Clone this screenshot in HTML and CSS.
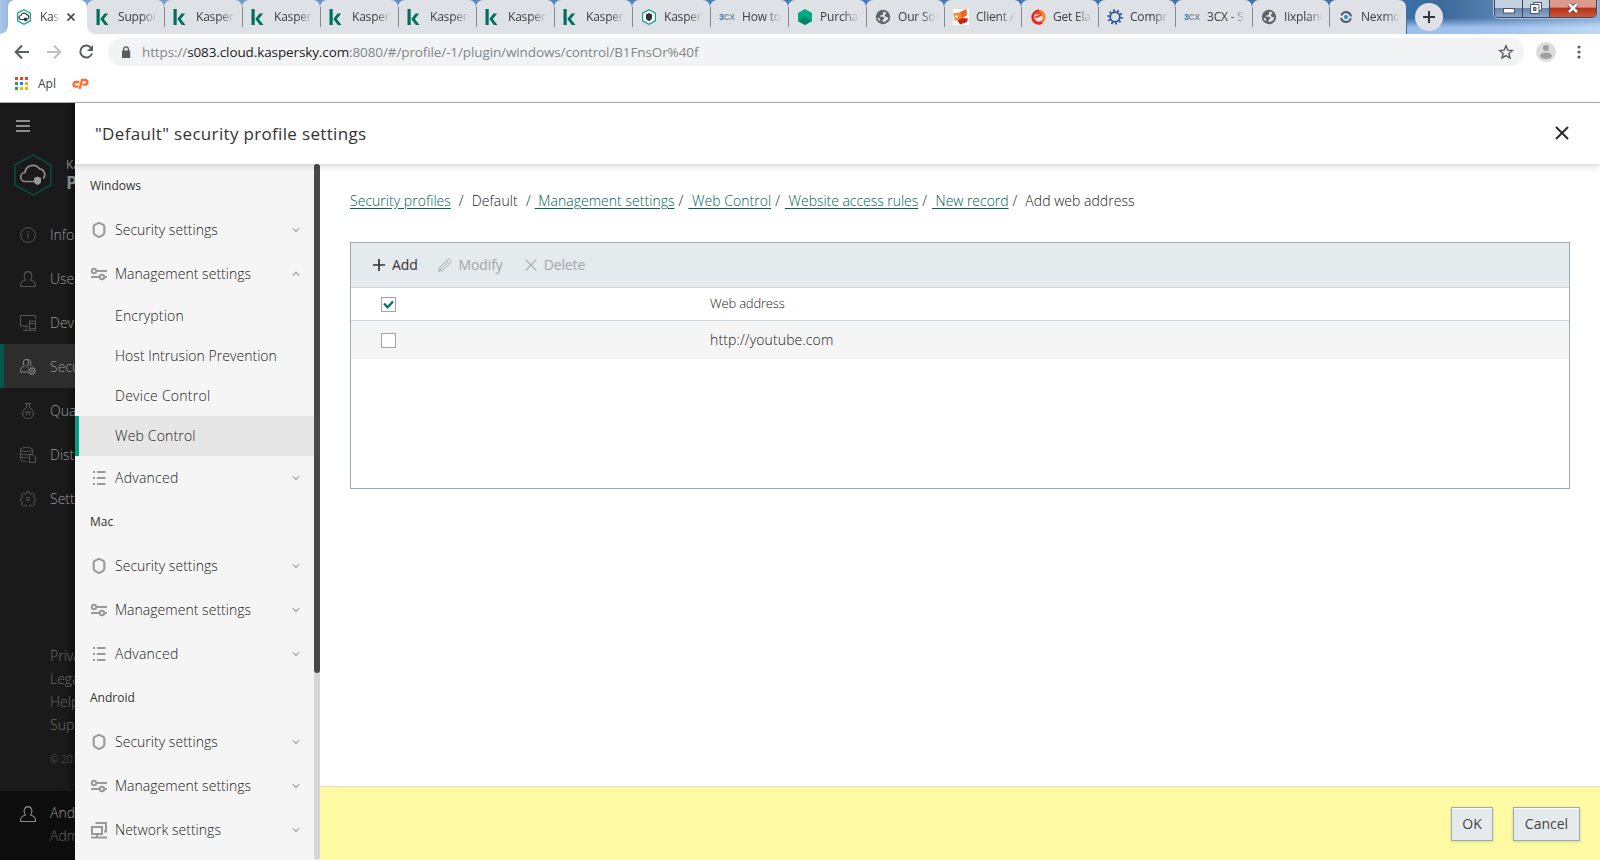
FILE: index.html
```
<!DOCTYPE html>
<html lang="en">
<head>
<meta charset="utf-8">
<title>Security profile settings</title>
<link rel="stylesheet" href="styles.css">
</head>
<body>
<svg class="defs" width="0" height="0">
  <symbol id="k" viewBox="0 0 16 16"><path d="M.5 0h3.200v16H.5zM8.500 4.500h3.700L7.800 10l4.700 6H8.800L4.300 10z" fill="#00705c"/></symbol>
  <symbol id="cloudhex" viewBox="0 0 16 16"><path d="M8 .7l6.400 3.500v7.600L8 15.300l-6.400-3.500V4.200z" fill="#fff" stroke="#12a087" stroke-width="1.200"/><path d="M8 10.500H5a2 2 0 0 1 0-4 3 3 0 0 1 5.600-.8 2.300 2.300 0 0 1 1.400 4" fill="none" stroke="#333" stroke-width="1.200"/><circle cx="9.700" cy="10.300" r="1.900" fill="#333"/></symbol>
  <symbol id="shieldhex" viewBox="0 0 16 16"><path d="M8 .7l6.400 3.500v7.600L8 15.300l-6.400-3.500V4.200z" fill="#fff" stroke="#12a087" stroke-width="1.200"/><path d="M8 4l3 1.500V9c0 1.500-1.500 2.500-3 3.200C6.500 11.500 5 10.500 5 9V5.500z" fill="#333"/></symbol>
  <symbol id="greenhex" viewBox="0 0 16 16"><path d="M8 0l7 4v8l-7 4-7-4V4z" fill="#00a982"/><path d="M1 12l7-4.500 7 4.500-7 4z" fill="#008468"/></symbol>
  <symbol id="globe" viewBox="0 0 16 16"><circle cx="8" cy="8" r="7.200" fill="#5f6368"/><path d="M8.500 2.500c-1 1.500.5 2-1 3.300C6.500 6.600 5 6 4.800 7.500c1.700.7 3-.2 4 .8 1 1 .3 1.700-.8 2.300-.6.400-.5 1.700-.3 2.400C11 13 13.200 10.800 13.400 8c-1.700.5-3-.1-3.600-1.400C9.500 5.200 11 5.300 11.500 4 10.800 3.200 9.700 2.700 8.500 2.500z" fill="#dee1e6"/><path d="M2.500 8.500c.8.500 2 .5 2.600 1.500.4.900-.1 1.500 0 2.300C3.600 11.500 2.700 10.300 2.500 8.500z" fill="#dee1e6"/></symbol>
  <symbol id="tcx" viewBox="0 0 16 16"><text x="0" y="11" class="cxt" textLength="16" lengthAdjust="spacingAndGlyphs"><tspan fill="#2c78c0">3</tspan><tspan fill="#85898e">CX</tspan></text></symbol>
  <symbol id="client" viewBox="0 0 16 16"><path d="M0 0h16v16H0z" fill="#fff"/><path d="M0 4.500L8 3l2 4-3 4-6 .5.500-3z" fill="#f28a3c"/><path d="M4.500 11.500L9 9l6 .500-1 3.500-7 2.500z" fill="#c8260e"/><path d="M7 3l6.500-3 .5 6-5 3.500z" fill="#f4631a"/><circle cx="3.500" cy="7.500" r="1.200" fill="#fff"/></symbol>
  <symbol id="elastix" viewBox="0 0 16 16"><path d="M8 2a6 6 0 1 1-5.500 8" fill="none" stroke="#f5821f" stroke-width="2.800"/><path d="M12 13.500A6.200 6.200 0 1 1 9 1.900" fill="none" stroke="#e3262c" stroke-width="2.600"/><path d="M5 8.500l6-2.500c0-2-3-3-5-1" fill="none" stroke="#ee4b23" stroke-width="2"/></symbol>
  <symbol id="burst" viewBox="0 0 16 16"><circle cx="8" cy="8" r="4.800" fill="none" stroke="#254f92" stroke-width="1.700"/><circle cx="8" cy="8" r="6.600" fill="none" stroke="#254f92" stroke-width="2.200" stroke-dasharray="1.700 2.447"/></symbol>
  <symbol id="nexmo" viewBox="0 0 16 16"><circle cx="8" cy="8" r="5" fill="none" stroke="#55595e" stroke-width="2" stroke-dasharray="13 2.700" transform="rotate(15 8 8)"/><circle cx="8" cy="8" r="2" fill="#1b8fe0"/></symbol>
  <symbol id="shield" viewBox="0 0 18 18"><path d="M9 1.900l4 1.700c1 .5 1.300 1 1.300 2v6c0 1-.3 1.600-1.300 2.200L9 16.100l-4-2.300c-1-.6-1.300-1.200-1.300-2.200v-6c0-1 .3-1.500 1.300-2z" fill="none" stroke="#999" stroke-width="2.100"/></symbol>
  <symbol id="sliders" viewBox="0 0 18 18"><g fill="none" stroke="#999" stroke-width="2"><circle cx="4" cy="6" r="2.200"/><path d="M6.200 6H17M1 12h8.500M14.200 12H17"/><circle cx="12" cy="12" r="2.200"/></g></symbol>
  <symbol id="list" viewBox="0 0 18 18"><path d="M3 3h2m2 0h8.500M3 9h2m2 0h8.500M3 15h2m2 0h8.500" stroke="#999" stroke-width="2" fill="none"/></symbol>
  <symbol id="network" viewBox="0 0 18 18"><path d="M2 6h10v7H2zM5.500 2H16v8.500h-2M1 16.500h16M7 13v3" fill="none" stroke="#999" stroke-width="2"/></symbol>
  <symbol id="down" viewBox="0 0 8 6"><path d="M.8 1.200L4 4.400l3.200-3.200" fill="none" stroke="#999" stroke-width="1.100"/></symbol>
  <symbol id="up" viewBox="0 0 8 6"><path d="M.8 4.600L4 1.400l3.200 3.200" fill="none" stroke="#999" stroke-width="1.100"/></symbol>
  <symbol id="person" viewBox="0 0 16 16"><path d="M5.500 9C2.500 10 .6 11 .6 13.500v2h14.800v-2C15.400 11 13.500 10 10.500 9 13 6 12 .6 8 .6S3 6 5.500 9z" fill="none" stroke="currentColor" stroke-width="1.100"/></symbol>
</svg>

<header class="browser">
  <div class="tabstrip">
    <div class="tab active"><svg><use href="#cloudhex"/></svg><span>Kas</span><svg class="tabx" viewBox="0 0 10 10"><path d="M1.500 1.500l7 7m0-7l-7 7" stroke="#3c4043" stroke-width="1.700"/></svg></div>
    <div class="tab first"><svg><use href="#k"/></svg><span>Suppor</span></div>
    <div class="tab"><svg><use href="#k"/></svg><span>Kaspers</span></div>
    <div class="tab"><svg><use href="#k"/></svg><span>Kaspers</span></div>
    <div class="tab"><svg><use href="#k"/></svg><span>Kaspers</span></div>
    <div class="tab"><svg><use href="#k"/></svg><span>Kaspers</span></div>
    <div class="tab"><svg><use href="#k"/></svg><span>Kaspers</span></div>
    <div class="tab"><svg><use href="#k"/></svg><span>Kaspers</span></div>
    <div class="tab"><svg><use href="#shieldhex"/></svg><span>Kaspers</span></div>
    <div class="tab"><svg><use href="#tcx"/></svg><span>How to</span></div>
    <div class="tab"><svg><use href="#greenhex"/></svg><span>Purchas</span></div>
    <div class="tab"><svg><use href="#globe"/></svg><span>Our Sol</span></div>
    <div class="tab n"><svg><use href="#client"/></svg><span>Client A</span></div>
    <div class="tab n"><svg><use href="#elastix"/></svg><span>Get Ela</span></div>
    <div class="tab n"><svg><use href="#burst"/></svg><span>Compr</span></div>
    <div class="tab n"><svg><use href="#tcx"/></svg><span>3CX - S</span></div>
    <div class="tab n"><svg><use href="#globe"/></svg><span>Iixplane</span></div>
    <div class="tab n"><svg><use href="#nexmo"/></svg><span>Nexmo</span></div>
    <div class="newtab"><svg viewBox="0 0 12 12"><path d="M6 0v12M0 6h12" stroke="#33373b" stroke-width="2"/></svg></div>
    <div class="winbtns">
      <div class="wb min"><svg viewBox="0 0 12 6"><rect x=".5" y=".5" width="11" height="4.500" fill="#fff" stroke="#4b5468"/></svg></div>
      <div class="wb max"><svg viewBox="0 0 12 12"><path d="M3.500.5h8v8h-8z" fill="#fff" stroke="#4b5468"/><path d="M.5 2.500h8.500v9H.5z" fill="#fff" stroke="#4b5468"/><path d="M3.500 5.500h2.500v3H3.500z" fill="#8aa0bd" stroke="#4b5468"/></svg></div>
      <div class="wb cls"><svg viewBox="0 0 12 10"><path d="M2 1l8 8m0-8L2 9" stroke="#5b3a42" stroke-width="4.200"/><path d="M2 1l8 8m0-8L2 9" stroke="#fff" stroke-width="2.500"/></svg></div>
    </div>
  </div>
  <div class="toolbar">
    <svg class="tb" viewBox="0 0 16 16"><path d="M15 8H2M8 1.500L1.700 8 8 14.500" fill="none" stroke="#5a5e63" stroke-width="2"/></svg>
    <svg class="tb" viewBox="0 0 16 16"><path d="M1 8h13M8 1.500L14.300 8 8 14.500" fill="none" stroke="#bdbfc1" stroke-width="2"/></svg>
    <svg class="tb" viewBox="0 0 16 16"><path d="M13.300 4.200A6 6 0 1 0 14 9.500" fill="none" stroke="#5a5e63" stroke-width="2"/><path d="M15 1v6H9z" fill="#5a5e63"/></svg>
    <div class="omnibox">
      <svg class="lock" viewBox="0 0 10 12"><path d="M1 4.500h8.200V12H1z" fill="#5a5e63"/><path d="M2.700 5V3.300a2.300 2.300 0 0 1 4.700 0V5" fill="none" stroke="#5a5e63" stroke-width="1.300"/></svg>
      <span class="url">https://<b>s083.cloud.kaspersky.com</b>:8080/#/profile/-1/plugin/windows/control/B1FnsOr%40f</span>
      <svg class="star" viewBox="0 0 16 16"><path d="M8 1.800l1.800 4.300 4.600.4-3.500 3 1.100 4.600L8 11.600l-4 2.500 1.100-4.600-3.500-3 4.600-.4z" fill="none" stroke="#5a5e63" stroke-width="1.400"/></svg>
    </div>
    <svg class="avatar" viewBox="0 0 20 20"><circle cx="10" cy="10" r="10" fill="#dcdcdc"/><circle cx="10" cy="6" r="3.100" fill="#a0a0a0"/><ellipse cx="10" cy="13.700" rx="6" ry="3.200" fill="#a0a0a0"/></svg>
    <svg class="dots" viewBox="0 0 4 14"><g fill="#5a5e63"><circle cx="2" cy="2" r="1.600"/><circle cx="2" cy="7" r="1.600"/><circle cx="2" cy="12" r="1.600"/></g></svg>
  </div>
  <div class="bookmarks">
    <svg class="apps" viewBox="0 0 13 13"><path d="M0 0h3v3H0zM5 0h3v3H5zM10 0h3v3h-3z" fill="#ea4335"/><path d="M0 5h3v3H0zM0 10h3v3H0z" fill="#34a050"/><path d="M5 5h3v3H5z" fill="#1a80f0"/><path d="M10 5h3v3h-3zM5 10h3v3H5zM10 10h3v3h-3z" fill="#f4b400"/></svg>
    <span>Apl</span>
    <svg class="cp" viewBox="0 0 17 12"><path d="M7.300 4H3.800a2.300 2.300 0 0 0 0 4.700h2.700M7.600 11L10 2h3a2.300 2.300 0 0 1 0 4.700h-2.500" fill="none" stroke="#ff6c2c" stroke-width="2.300"/></svg>
  </div>
</header>

<div class="page">
  <aside class="side">
    <svg class="burger" viewBox="0 0 14 12"><path d="M0 1h14M0 6h14M0 11h14" stroke="#8c8c8c" stroke-width="2"/></svg>
    <div class="brand">
      <svg viewBox="0 0 38 42"><path d="M19 1l18 10v20L19 41 1 31V11z" fill="none" stroke="#00574a" stroke-width="1.300"/><path d="M20 27.500H11.500a4.500 4.500 0 0 1-.5-9 8 8 0 0 1 14.500-3.700c4.800.2 7 7 3.500 9.500" fill="none" stroke="#8c8c8c" stroke-width="1.700"/><path d="M23.500 22.500l3.500 1.500v3.500c0 2-2 3-3.500 3.500-1.500-.5-3.500-1.500-3.500-3.500V24z" fill="#999"/></svg>
      <div><small>Ka</small><strong>P</strong></div>
    </div>
    <nav class="menu">
      <a><svg viewBox="0 0 16 16"><circle cx="8" cy="8" r="7.400"/><path d="M8 6.500v5M8 4v1.300"/></svg>Info</a>
      <a><svg viewBox="0 0 16 16"><use href="#person"/></svg>Use</a>
      <a><svg viewBox="0 0 16 16"><path d="M15.500 4V.5H.5v10.500h8M6 11v4.500M3.500 15.500H9M9.500 15.500v-9.500h6v9.500zM9.500 8.500h6M9.500 13.500h6"/></svg>Dev</a>
      <a class="on"><svg viewBox="0 0 16 16"><path d="M6 .5c3 0 3.500 4.500 1 6.500v1.500M6 .5C3 .5 2.500 5 4.500 7 2 8 .5 8.500.5 13h7M7 1c3.500-1.500 5 3 3 6"/><circle cx="12" cy="12" r="3"/><circle cx="12" cy="12" r="1"/><circle cx="12" cy="12" r="3.800" stroke-dasharray="1.200 1.785"/></svg>Secu</a>
      <a><svg viewBox="0 0 16 16"><path d="M5 .5h6M6.500.5V5a5.500 5.500 0 1 0 3 0V.500M4.500 9l3 .500-1.500 3M11.500 9l-3 .500 1.500 3M8 7v2"/></svg>Qua</a>
      <a><svg viewBox="0 0 16 16"><ellipse cx="6.500" cy="2.500" rx="6" ry="2"/><path d="M.5 2.500v10c0 1.500 3 2 6 2M12.500 2.500V6M.5 6c0 2 8 2.500 12 .500M.5 9c0 1.500 4 2 7.500 1.500M9.500 7.500h3.500l2.500 2.500v5.500h-6z"/></svg>Dist</a>
      <a><svg viewBox="0 0 16 16"><path d="M6.700.6h2.600l.4 2 1.400.6 1.700-1.100 1.800 1.800-1.100 1.700.6 1.400 1.900.4v2.400l-1.900.4-.6 1.400 1.100 1.700-1.800 1.800-1.700-1.100-1.400.6-.4 1.900H6.700l-.4-1.900-1.400-.6-1.700 1.100-1.800-1.800 1.100-1.700-.6-1.400L.5 9.800V7.400L1.900 7l.6-1.400-1.100-1.700 1.800-1.800 1.700 1.100 1.400-.6z"/><circle cx="8" cy="8" r="1.700"/></svg>Sett</a>
    </nav>
    <div class="links"><a>Priva</a><a>Lega</a><a>Help</a><a>Supp</a><small>© 201</small></div>
    <div class="user"><svg viewBox="0 0 16 16"><use href="#person"/></svg><div><span>And</span><em>Adm</em></div></div>
  </aside>

  <section class="panel">
    <div class="head"><h1>"Default" security profile settings</h1><svg viewBox="0 0 14 14"><path d="M1 1l12 12m0-12L1 13" stroke="#2b2b2b" stroke-width="2"/></svg></div>
    <div class="body">
      <nav class="nav">
        <h2>Windows</h2>
        <a><svg class="ic"><use href="#shield"/></svg><span>Security settings</span><svg class="ch"><use href="#down"/></svg></a>
        <a><svg class="ic"><use href="#sliders"/></svg><span>Management settings</span><svg class="ch"><use href="#up"/></svg></a>
        <a class="sub"><span class="enc">Encryption</span></a>
        <a class="sub"><span>Host Intrusion Prevention</span></a>
        <a class="sub"><span class="dev">Device Control</span></a>
        <a class="sub sel"><span class="web">Web Control</span></a>
        <a><svg class="ic"><use href="#list"/></svg><span class="adv">Advanced</span><svg class="ch"><use href="#down"/></svg></a>
        <h2>Mac</h2>
        <a><svg class="ic"><use href="#shield"/></svg><span>Security settings</span><svg class="ch"><use href="#down"/></svg></a>
        <a><svg class="ic"><use href="#sliders"/></svg><span>Management settings</span><svg class="ch"><use href="#down"/></svg></a>
        <a><svg class="ic"><use href="#list"/></svg><span class="adv">Advanced</span><svg class="ch"><use href="#down"/></svg></a>
        <h2>Android</h2>
        <a><svg class="ic"><use href="#shield"/></svg><span>Security settings</span><svg class="ch"><use href="#down"/></svg></a>
        <a><svg class="ic"><use href="#sliders"/></svg><span>Management settings</span><svg class="ch"><use href="#down"/></svg></a>
        <a><svg class="ic"><use href="#network"/></svg><span>Network settings</span><svg class="ch"><use href="#down"/></svg></a>
      </nav>
      <div class="scroll"><i></i></div>
      <main class="main">
        <div class="content">
          <div class="crumbs"><a>Security profiles</a><i class="s1">/</i><span class="c2">Default</span><i class="s2">/</i><a> Management settings</a><i>/</i><a> Web Control</a><i>/</i><a class="c5"> Website access rules</a><i>/</i><a class="c6"> New record</a><i class="s6">/</i><span>Add web address</span></div>
          <div class="grid">
            <div class="tools">
              <svg class="t1" viewBox="0 0 12 12"><path d="M6 0v12M0 6h12" stroke="#333" stroke-width="1.700"/></svg><span class="add">Add</span>
              <svg class="t2" viewBox="0 0 14 14"><path d="M.7 13.300l1-4L9.600 1.400a1.500 1.500 0 0 1 2.200 0l.9.900a1.500 1.500 0 0 1 0 2.200l-7.900 7.900zM1.700 9.300l3 3M8.300 2.700l3 3M3.500 10.500l6-6" fill="none" stroke="#a9acae"/></svg><span>Modify</span>
              <svg class="t3" viewBox="0 0 12 12"><path d="M.7.7l10.600 10.600m0-10.600L.7 11.300" stroke="#a3a6a8" stroke-width="1.100"/></svg><span>Delete</span>
            </div>
            <div class="row hd"><div class="cb"><svg viewBox="0 0 13 13"><path d="M2 5.500l3.600 3.800L11 3.500" fill="none" stroke="#00705c" stroke-width="2.200"/></svg></div><span class="wa">Web address</span></div>
            <div class="row alt"><div class="cb"></div><span class="yt">http://youtube.com</span></div>
          </div>
        </div>
        <footer class="foot"><button class="ok">OK</button><button class="cancel">Cancel</button></footer>
      </main>
    </div>
  </section>
</div>
</body>
</html>
```
FILE: styles.css
```
* { box-sizing: border-box; }
body { margin: 0; width: 1600px; height: 860px; overflow: hidden; background: #fff; font-family: "Open Sans", "Noto Sans", sans-serif; }
svg { display: block; flex: none; }
.defs { position: absolute; }
.cxt { font: bold 9px "Liberation Sans", sans-serif; }

.browser { height: 103px; border-bottom: 1px solid #aeaeae; }
.tabstrip { height: 34px; display: flex; padding-left: 8px; position: relative; font-size: 12px; color: #3c4043;
  background: linear-gradient(90deg, #a9c6ea 0, #83a6cf 20px, #4a7fc0 40%, #3a6ea8 88%, #3d6a9b 90%, #86add9 100%); }
.tab { width: 78px; height: 34px; background: #dee1e6; display: flex; align-items: center; padding-left: 9px; border-radius: 7px 7px 0 0; position: relative; }
.tab::before { content: ""; position: absolute; left: 0; top: 7px; width: 1px; height: 20px; background: #85888c; }
.tab.first::before { display: none; }
.tab.n { width: 77px; }
.tab svg { width: 16px; height: 16px; }
.tab span { margin-left: 7px; width: 39px; height: 18px; line-height: 18px; overflow: hidden; white-space: nowrap; letter-spacing: -.2px; -webkit-mask-image: linear-gradient(90deg, #000 60%, transparent 100%); mask-image: linear-gradient(90deg, #000 60%, transparent 100%); }
.tab.active { background: #fff; width: 79px; padding-left: 8px; z-index: 1; }
.tab.active::before, .tab.active::after { content: ""; position: absolute; top: 26px; width: 8px; height: 8px; }
.tab.active::before { left: -8px; background: radial-gradient(circle at 0 0, transparent 7.5px, #fff 8px); }
.tab.active::after { left: auto; right: -8px; background: radial-gradient(circle at 100% 0, transparent 7.5px, #fff 8px); }
.tab.active span { width: 20px; margin-left: 8px; letter-spacing: -.4px; }
.tab .tabx { width: 10px; height: 10px; margin-left: 6px; }
.tab.first { width: 77px; padding-left: 9px; }
.tab.first span { margin-left: 6px; }
.newtab { width: 28px; height: 28px; border-radius: 50%; background: #dee1e6; margin: 3px 0 0 9px; display: flex; align-items: center; justify-content: center; }
.newtab svg { width: 12px; height: 12px; }
.tabstrip::after { content: ""; position: absolute; right: 0; top: 18px; width: 193px; height: 16px; z-index: 0; background: linear-gradient(90deg, #9dbfea, #a4c4ef 50%, #c0d9f3); -webkit-mask-image: linear-gradient(transparent, #000 60%); mask-image: linear-gradient(transparent, #000 60%); }
.newtab, .winbtns { z-index: 1; }
.winbtns { margin: 0 3px 0 auto; width: 103px; height: 18px; display: flex; border: 1px solid #3c4759; border-top: 0; border-radius: 0 0 5px 5px; overflow: hidden; box-shadow: 0 0 0 1px #a9c1dc; }
.wb { display: flex; align-items: center; justify-content: center; }
.min { width: 28px; background: linear-gradient(#c3d0e0 45%, #6984a8 50%, #8ba9cc); border-right: 1px solid #3c4759; }
.max { width: 27px; background: linear-gradient(#c3d0e0 45%, #6984a8 50%, #8ba9cc); border-right: 1px solid #3c4759; }
.cls { flex: 1; background: linear-gradient(#dc9a8c 40%, #b83418 50%, #cb5a3c); }
.min svg { width: 12px; height: 6px; margin-top: 4px; }
.max svg { width: 12px; height: 12px; margin-top: -2px; }
.cls svg { width: 12px; height: 10px; margin-top: -2px; }

.toolbar { height: 35px; display: flex; align-items: center; padding-left: 14px; }
.tb { width: 16px; height: 16px; margin-right: 16px; }
.omnibox { width: 1416px; height: 28px; margin-left: -2px; border-radius: 14px; background: #f1f3f4; display: flex; align-items: center; padding: 0 10px 0 13px; }
.lock { width: 10px; height: 12px; }
.url { margin: 0 auto 0 11px; font-size: 13.5px; letter-spacing: -.11px; line-height: 20px; color: #80868b; white-space: nowrap; }
.url b { font-weight: 400; color: #202124; }
.star { width: 16px; height: 16px; }
.avatar { width: 20px; height: 20px; margin-left: 12px; }
.dots { width: 4px; height: 14px; margin-left: 21px; }
.bookmarks { height: 29px; display: flex; align-items: center; padding-left: 15px; font-size: 12px; color: #3c4043; }
.apps { width: 13px; height: 13px; }
.bookmarks span { margin-left: 10px; width: 18px; }
.cp { width: 17px; height: 12px; margin-left: 16px; }

.page { height: 757px; display: flex; }
.side { width: 75px; background: #1a1a1a; display: flex; flex-direction: column; overflow: hidden; white-space: nowrap; color: #999; font-weight: 300; box-shadow: inset -8px 0 8px -6px #0d0d0d; }
.burger { width: 14px; height: 12px; margin: 17px 0 0 16px; }
.brand { margin: 22px 0 0 14px; height: 43px; display: flex; }
.brand svg { width: 38px; height: 42px; }
.brand div { margin-left: 14px; display: flex; flex-direction: column; font-weight: 400; color: #858585; }
.brand small { font-size: 12px; line-height: 20px; margin-top: 1px; }
.brand strong { font-size: 18px; line-height: 14px; }
.menu { margin-top: 15px; }
.menu a { height: 44px; display: flex; align-items: center; padding: 1px 0 0 20px; font-size: 14px; }
.menu svg { width: 16px; height: 16px; margin: 1px 14px 0 0; fill: none; stroke: #565656; stroke-width: 1; color: #565656; }
.menu .on { background: #2d2d2d; border-left: 4px solid #00574a; padding-left: 16px; }
.menu .on svg { stroke: #8c8c8c; }
.links { margin: 124px 0 0 50px; display: flex; flex-direction: column; font-size: 14px; line-height: 23px; color: #6a6a6a; }
.links small { font-size: 10px; line-height: 22px; margin-top: 12px; color: #5c5c5c; }
.user { margin-top: auto; height: 69px; flex: none; background: #0d0d0d; display: flex; padding: 10px 0 0 20px; font-size: 14px; line-height: 23px; }
.user svg { width: 16px; height: 16px; margin: 5px 14px 0 0; color: #8c8c8c; }
.user div { display: flex; flex-direction: column; }
.user em { font-style: normal; color: #666; }

.panel { flex: 1; display: flex; flex-direction: column; color: #222; }
.head { height: 61px; display: flex; align-items: center; justify-content: space-between; padding: 0 31px 0 20px; box-shadow: 0 2px 7px rgba(0,0,0,.17); z-index: 1; }
.head h1 { margin: 0; font-size: 17px; letter-spacing: .33px; font-weight: 400; white-space: nowrap; color: #333; }
.head svg { width: 14px; height: 14px; margin-top: -2px; }
.body { height: 696px; display: flex; }
.nav { width: 239px; background: #f5f5f5; overflow: hidden; }
.nav h2 { margin: 0; height: 44px; line-height: 44px; padding-left: 15px; font-size: 12px; font-weight: 400; color: #333; }
.nav a { height: 44px; display: flex; align-items: center; padding: 0 14px 2px 15px; font-size: 14px; font-weight: 300; letter-spacing: .03px; white-space: nowrap; }
.nav .ic { width: 18px; height: 18px; margin: 2px 7px 0 0; }
.nav .ch { width: 8px; height: 6px; margin: 1px 0 0 auto; }
.nav .sub { height: 40px; padding-left: 40px; padding-bottom: 2px; }
.nav .sel { background: #e6e6e6; border-left: 4px solid #00a088; padding-left: 36px; }
.enc, .web { letter-spacing: .17px; }
.dev, .adv { letter-spacing: .25px; }
.scroll { width: 6px; background: #d6d6d6; border-radius: 3px; }
.scroll i { display: block; height: 509px; background: #484848; border-radius: 3px; }
.main { flex: 1; display: flex; flex-direction: column; }
.content { flex: 1; padding: 26px 30px 0; }
.crumbs { height: 22px; line-height: 22px; display: flex; font-size: 14px; font-weight: 300; white-space: pre; color: #222; letter-spacing: .03px; }
.crumbs a { color: #006553; text-decoration: underline; text-underline-offset: 2px; }
.crumbs i { font-style: normal; margin: 0 5px 0 4px; }
.crumbs .s1 { margin: 0 8px 0 8px; }
.crumbs .s2 { margin-left: 8px; margin-right: 4px; }
.crumbs .c2 { letter-spacing: .13px; }
.crumbs .c5, .crumbs .c6 { letter-spacing: -.04px; }
.crumbs .s6 { margin-right: 8px; }
.grid { margin-top: 30px; height: 247px; border: 1px solid #9aabb6; }
.tools { height: 45px; background: #e5eaed; border-bottom: 1px solid #cdd7dd; display: flex; align-items: center; padding: 0 0 1px 22px; font-size: 14px; letter-spacing: -.13px; color: #a3a6a8; }
.tools .add { color: #333; }
.tools span { margin-left: 7px; }
.t1, .t3 { width: 12px; height: 12px; }
.t2 { width: 14px; height: 14px; margin-left: 20px; }
.t3 { margin-left: 22px; }
.row { display: flex; align-items: center; padding-left: 30px; }
.row span { margin-left: 314px; font-size: 14px; font-weight: 300; letter-spacing: .12px; padding-bottom: 2px; }
.hd { height: 33px; border-bottom: 1px solid #cdd7dd; }
.row .wa { font-size: 13px; letter-spacing: -.18px; }
.alt { height: 38px; background: #f5f5f5; }
.cb { width: 15px; height: 15px; border: 1px solid #a3a3a3; background: #fff; }
.foot { height: 74px; background: #fffaa3; border-top: 1px solid #ddd; display: flex; justify-content: flex-end; gap: 20px; padding: 20px 20px 0; }
.foot button { height: 34px; padding: 0 0 2px; border: 1px solid #9aabb6; background: #e5eaed; font: 400 14px "Open Sans", sans-serif; color: #444; box-shadow: inset 0 1px #fff, 0 1px 3px rgba(0,0,0,.15); }
.ok { width: 42px; }
.cancel { width: 67px; }
```
